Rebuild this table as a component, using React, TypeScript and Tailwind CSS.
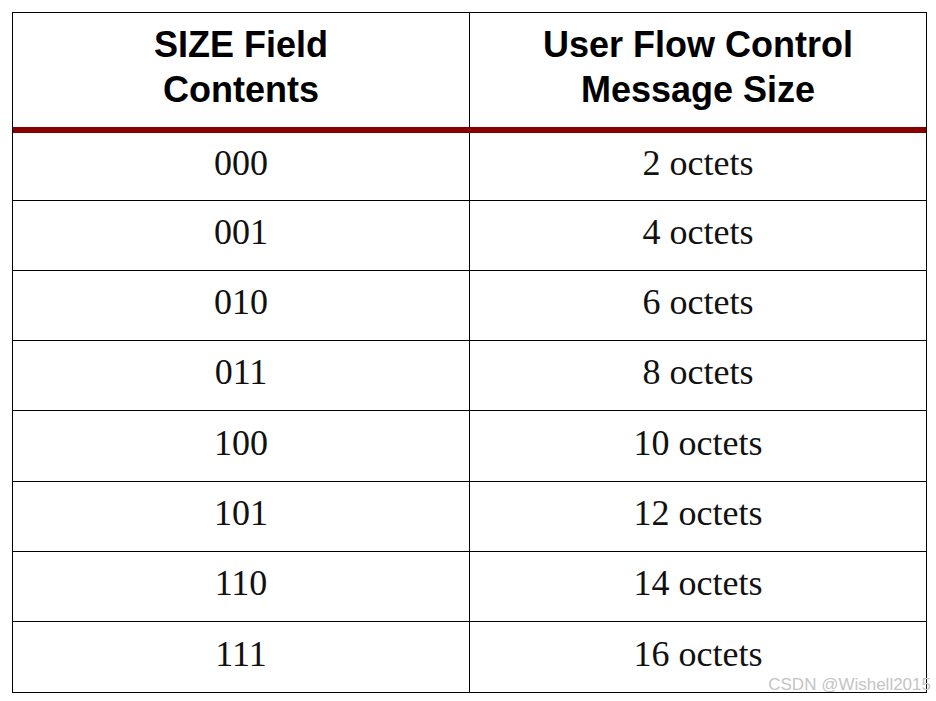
const rows = [
  ["000", "2 octets", "h-[68px]"],
  ["001", "4 octets", "h-[70px]"],
  ["010", "6 octets", "h-[70px]"],
  ["011", "8 octets", "h-[70px]"],
  ["100", "10 octets", "h-[71px]"],
  ["101", "12 octets", "h-[70px]"],
  ["110", "14 octets", "h-[70px]"],
  ["111", "16 octets", "h-[70px]"],
];

const serif = { fontFamily: '"Liberation Serif", "DejaVu Serif", serif' };
const sans = { fontFamily: '"Liberation Sans", Arial, sans-serif' };

export default function App() {
  return (
    <div className="relative h-[701px] w-[936px] bg-white p-[12px]">
      <div className="w-[915px] border border-black">
        {/* header */}
        <div className="flex h-[120px] border-b-[6px] border-[#870000]">
          {["SIZE Field|Contents", "User Flow Control|Message Size"].map((h, i) => (
            <div
              key={h}
              className={
                "flex flex-1 flex-col items-center justify-center pb-[6px] text-[36px] font-bold leading-[45px] text-black " +
                (i === 0 ? "border-r border-black" : "")
              }
              style={sans}
            >
              {h.split("|").map((l) => (
                <span key={l}>{l}</span>
              ))}
            </div>
          ))}
        </div>

        {/* body */}
        <div className="flex flex-col">
          {rows.map(([code, size, h], i) => (
            <div
              key={code}
              className={
                "flex " + h + " " + (i < rows.length - 1 ? "border-b border-black" : "")
              }
            >
              <div
                className="flex flex-1 items-center justify-center border-r border-black pb-[7px] text-[36px] text-[#111]"
                style={serif}
              >
                {code}
              </div>
              <div
                className="flex flex-1 items-center justify-center pb-[7px] text-[36px] text-[#111]"
                style={serif}
              >
                {size}
              </div>
            </div>
          ))}
        </div>
      </div>

      <span
        className="absolute bottom-[8px] right-[5px] text-[17px] leading-none text-[#c4c4c4]"
        style={sans}
      >
        CSDN @Wishell2015
      </span>
    </div>
  );
}
